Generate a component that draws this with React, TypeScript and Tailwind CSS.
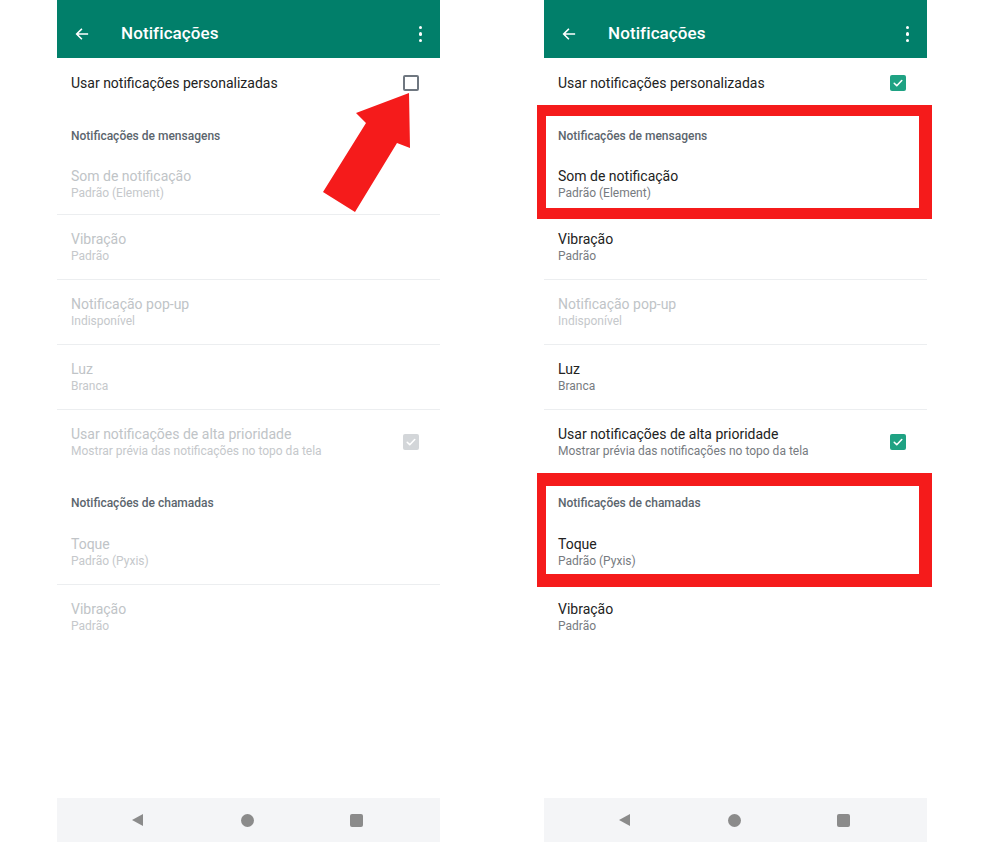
import React from "react";

type Check = "off" | "on" | "muted";

type Row =
  | { kind: "section"; title: string }
  | { kind: "item"; title: string; sub?: string; disabled?: boolean; check?: Check; divider?: boolean; first?: boolean };

function Checkbox({ state }: { state: Check }) {
  if (state === "off") {
    return <div className="h-[16px] w-[16px] rounded-[2px] border-2 border-[#6f7780]" />;
  }
  const bg = state === "on" ? "bg-[#1fa283]" : "bg-[#d3d6d9]";
  return (
    <div className={`flex h-[16px] w-[16px] items-center justify-center rounded-[2px] ${bg}`}>
      <svg width="12" height="12" viewBox="0 0 24 24" fill="none" stroke="white" strokeWidth="3.2" strokeLinecap="round" strokeLinejoin="round">
        <path d="M4.5 12.5l5 5L19.5 7" />
      </svg>
    </div>
  );
}

function Header() {
  return (
    <div className="flex h-[58px] shrink-0 items-center bg-[#017f6a] pl-[17px] pr-[17px] pt-[10px] text-white">
      <svg width="16" height="16" viewBox="0 0 24 24" fill="none" stroke="white" strokeWidth="2.4" strokeLinecap="square">
        <path d="M20 12H5M11 5l-7 7 7 7" />
      </svg>
      <span className="ml-[31px] text-[17px] font-medium tracking-[0.1px]">Notificações</span>
      <div className="ml-auto flex flex-col items-center gap-[3px] pr-[1px]">
        <span className="h-[3.5px] w-[3.5px] rounded-full bg-white" />
        <span className="h-[3.5px] w-[3.5px] rounded-full bg-white" />
        <span className="h-[3.5px] w-[3.5px] rounded-full bg-white" />
      </div>
    </div>
  );
}

function NavBar() {
  return (
    <div className="mt-auto flex h-[44px] shrink-0 items-center bg-[#f4f5f7]">
      <div className="flex w-full items-center pl-[73px]">
        <svg width="14" height="14" viewBox="0 0 14 14">
          <path d="M13 1v12L2 7z" fill="#8b8b8b" />
        </svg>
        <span className="ml-[97px] h-[13px] w-[13px] rounded-full bg-[#8b8b8b]" />
        <span className="ml-[96px] h-[13px] w-[13px] rounded-[2px] bg-[#8b8b8b]" />
      </div>
    </div>
  );
}

function Phone({ rows, topCheck, children }: { rows: Row[]; topCheck: Check; children?: React.ReactNode }) {
  return (
    <div className="relative flex h-[842px] w-[383px] flex-col bg-white">
      <Header />
      <div className="flex h-[49px] items-center justify-between pl-[14px] pr-[21px]">
        <span className="text-[14px] leading-[18px] text-[#222]">Usar notificações personalizadas</span>
        <Checkbox state={topCheck} />
      </div>
      {rows.map((r, i) =>
        r.kind === "section" ? (
          <div key={i} className="h-[46px] pl-[14px] pt-[21px] text-[12px] font-medium leading-[16px] text-[#5b656d]">
            {r.title}
          </div>
        ) : (
          <div
            key={i}
            className={`flex shrink-0 items-center justify-between pl-[14px] pr-[21px] ${r.first ? "h-[62px]" : r.divider ? "h-[65px]" : "h-[64px]"} ${r.divider ? "border-b border-[#eceef0]" : ""}`}
          >
            <div className="flex flex-col">
              <span className={`text-[14px] leading-[18px] ${r.disabled ? "text-[#c0c4c7]" : "text-[#222]"}`}>{r.title}</span>
              {r.sub && (
                <span className={`text-[12px] leading-[16px] ${r.disabled ? "text-[#c5c8cb]" : "text-[#777b7f]"}`}>{r.sub}</span>
              )}
            </div>
            {r.check && <Checkbox state={r.check} />}
          </div>
        )
      )}
      <NavBar />
      {children}
    </div>
  );
}

function buildRows(enabled: boolean): Row[] {
  const d = !enabled;
  return [
    { kind: "section", title: "Notificações de mensagens" },
    { kind: "item", title: "Som de notificação", sub: "Padrão (Element)", disabled: d, divider: true, first: true },
    { kind: "item", title: "Vibração", sub: "Padrão", disabled: d, divider: true },
    { kind: "item", title: "Notificação pop-up", sub: "Indisponível", disabled: true, divider: true },
    { kind: "item", title: "Luz", sub: "Branca", disabled: d, divider: true },
    {
      kind: "item",
      title: "Usar notificações de alta prioridade",
      sub: "Mostrar prévia das notificações no topo da tela",
      disabled: d,
      check: enabled ? "on" : "muted",
    },
    { kind: "section", title: "Notificações de chamadas" },
    { kind: "item", title: "Toque", sub: "Padrão (Pyxis)", disabled: d, divider: true },
    { kind: "item", title: "Vibração", sub: "Padrão", disabled: d },
  ];
}

export default function App() {
  return (
    <div className="flex h-[842px] w-[984px] overflow-hidden bg-white pl-[57px] font-['Roboto',sans-serif]">
      <Phone rows={buildRows(false)} topCheck="off">
        {/* pointer arrow toward the checkbox */}
        <svg className="pointer-events-none absolute left-0 top-0" width="383" height="260" viewBox="0 0 383 260">
          <polygon points="352,93 299,113 309,123 266,192 298,212 340,143 353,148" fill="#f51b1b" />
        </svg>
      </Phone>
      <div className="ml-[104px]">
        <Phone rows={buildRows(true)} topCheck="on">
          <div className="pointer-events-none absolute left-[-7px] top-[105px] h-[114px] w-[395px] border-[11px] border-[#f51b1b] border-l-[9px] border-r-[13px]" />
          <div className="pointer-events-none absolute left-[-7px] top-[473px] h-[114px] w-[395px] border-[13px] border-[#f51b1b] border-l-[9px] border-r-[13px]" />
        </Phone>
      </div>
    </div>
  );
}
